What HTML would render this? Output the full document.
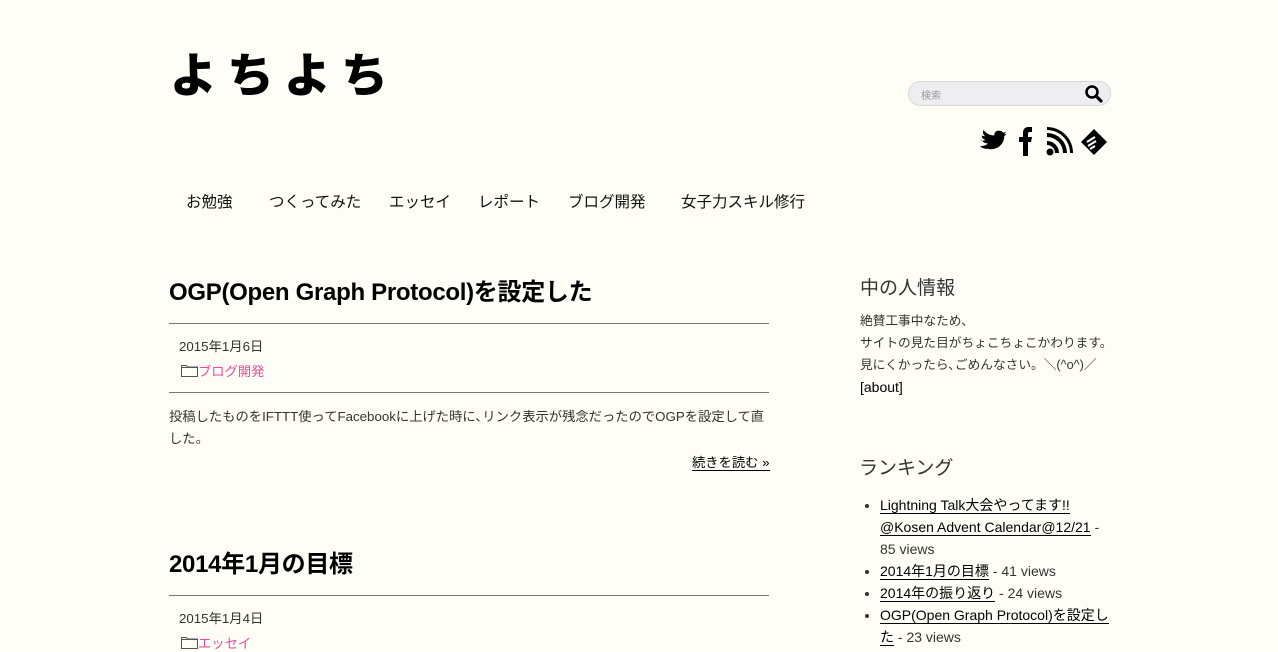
<!DOCTYPE html>
<html><head><meta charset="utf-8"><style>
body{margin:0;background:#fffef6;font-family:"Liberation Sans","Noto Sans CJK JP",sans-serif;color:#222;width:1278px;height:651px;overflow:hidden;position:relative}
.a{position:absolute;white-space:nowrap}
.logo{left:170px;top:44px;font-size:47px;font-weight:900;letter-spacing:10px;color:#000;line-height:64px}
.search{left:908px;top:81px;width:201px;height:23px;border:1px solid #d8d8d8;border-radius:12px;background:#eeeef0}
.search span{position:absolute;left:12px;top:5px;font-size:10px;color:#999}
.nav{top:190px;font-size:15.5px;color:#111}
h2{margin:0;font-size:24px;font-weight:bold;color:#000;letter-spacing:-0.3px}
.hr{position:absolute;left:169px;width:600px;height:1px;background:#777}
.s{font-size:13.3px;color:#333}
.pink{color:#e94b9c}
.side h3{font-weight:normal;font-size:19px;color:#333;margin:0}
.sd{font-size:12.7px;color:#333}
u{text-decoration:none;border-bottom:1px solid #000;color:#000}
ul{margin:0;padding-left:20px;font-size:14px;line-height:22px;color:#333}
</style></head><body>
<div class="a logo">よちよち</div>
<div class="a search"><span>検索</span>
<svg style="position:absolute;right:6px;top:2px" width="20" height="20" viewBox="0 0 20 20"><circle cx="8" cy="8" r="5.5" fill="none" stroke="#000" stroke-width="2.6"/><path d="M12 12l5 5" stroke="#000" stroke-width="3.2" stroke-linecap="round"/></svg></div>
<svg class="a" style="left:979px;top:127px" width="130" height="30" viewBox="0 0 130 30">
<path d="M1 11c3 1 5 1 6 0-3-1-4-3-4-5 1 1 3 1 4 1-3-2-3-5-2-7 3 4 7 6 12 6 0-4 3-6 6-5 2 0 3 1 4 2l3-1-2 3 3-1-3 3c0 9-8 16-18 14-4 0-7-1-9-3 4 0 7-1 9-3-4 0-6-2-7-4z" fill="#000" transform="translate(0,3) scale(0.9)"/>
<path d="M44 29V15h-4v-5h4V6c0-4 2-6 6-6h3v5h-2c-2 0-2 1-2 2v3h4l-1 5h-3v14z" fill="#000"/>
<circle cx="71" cy="25" r="3.5" fill="#000"/><path d="M68 14a12 12 0 0 1 12 12h-4a8 8 0 0 0-8-8z M68 6a20 20 0 0 1 20 20h-4A16 16 0 0 0 68 10z M68 0a26 26 0 0 1 26 26h-3A23 23 0 0 0 68 3z" fill="#000"/>
<path d="M115 2l13 13-13 13-13-13z" fill="#000"/><path d="M108 15l8-5M109 19l8-5M111 22l5-3" stroke="#fff" stroke-width="2"/>
</svg>
<div class="a nav" style="left:186px">お勉強</div>
<div class="a nav" style="left:269px">つくってみた</div>
<div class="a nav" style="left:389px">エッセイ</div>
<div class="a nav" style="left:478px">レポート</div>
<div class="a nav" style="left:568px">ブログ開発</div>
<div class="a nav" style="left:681px">女子力スキル修行</div>

<div class="a" style="left:169px;top:272px"><h2>OGP(Open Graph Protocol)を設定した</h2></div>
<div class="hr" style="top:323px"></div>
<div class="a s" style="left:179px;top:336px">2015年1月6日</div>
<div class="a s" style="left:181px;top:361px"><svg width="17" height="13" viewBox="0 0 17 13" style="vertical-align:-1px"><path d="M.5 12.5V1.5h5l1 1.5h10v9.5z M.5 3.5h16" fill="none" stroke="#555"/></svg><span class="pink">ブログ開発</span></div>
<div class="hr" style="top:392px"></div>
<div class="a s" style="left:169px;top:406px;line-height:22px">投稿したものをIFTTT使ってFacebookに上げた時に､リンク表示が残念だったのでOGPを設定して直<br>した。</div>
<div class="a s" style="left:692px;top:452px"><u>続きを読む »</u></div>

<div class="a" style="left:169px;top:544px"><h2>2014年1月の目標</h2></div>
<div class="hr" style="top:595px"></div>
<div class="a s" style="left:179px;top:608px">2015年1月4日</div>
<div class="a s" style="left:181px;top:633px"><svg width="17" height="13" viewBox="0 0 17 13" style="vertical-align:-1px"><path d="M.5 12.5V1.5h5l1 1.5h10v9.5z M.5 3.5h16" fill="none" stroke="#555"/></svg><span class="pink">エッセイ</span></div>

<div class="a side" style="left:860px;top:273px"><h3>中の人情報</h3></div>
<div class="a sd" style="left:860px;top:310px;line-height:22px">絶賛工事中なため､<br>サイトの見た目がちょこちょこかわります。<br>見にくかったら､ごめんなさい。＼(^o^)／<br><span style="color:#000;font-size:14px">[about]</span></div>
<div class="a side" style="left:859px;top:453px"><h3>ランキング</h3></div>
<div class="a" style="left:860px;top:494px">
<ul><li><u>Lightning Talk大会やってます!!</u><br><u>@Kosen Advent Calendar@12/21</u> -<br>85 views</li>
<li><u>2014年1月の目標</u> - 41 views</li>
<li><u>2014年の振り返り</u> - 24 views</li>
<li><u>OGP(Open Graph Protocol)を設定し</u><br><u>た</u> - 23 views</li></ul></div>
</body></html>
